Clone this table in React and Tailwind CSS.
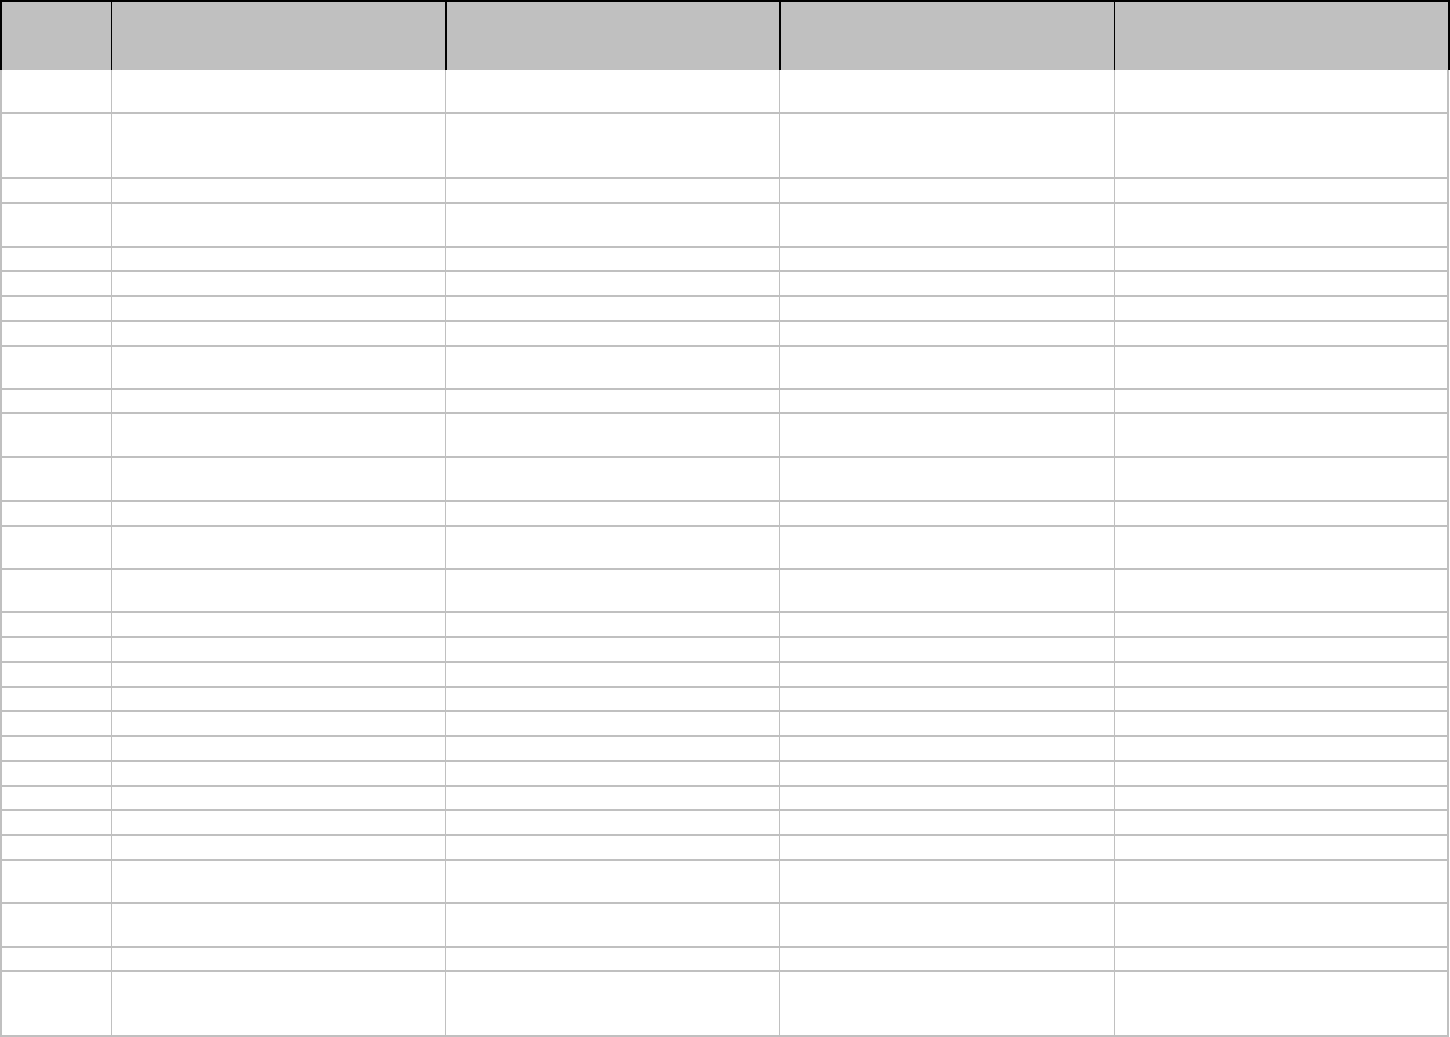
const rows = [
  "h-[44px]",
  "h-[65px]",
  "h-[25px]",
  "h-[44px]",
  "h-[24px]",
  "h-[25px]",
  "h-[25px]",
  "h-[25px]",
  "h-[43px]",
  "h-[24px]",
  "h-[44px]",
  "h-[44px]",
  "h-[25px]",
  "h-[43px]",
  "h-[43px]",
  "h-[25px]",
  "h-[25px]",
  "h-[25px]",
  "h-[24px]",
  "h-[25px]",
  "h-[25px]",
  "h-[25px]",
  "h-[24px]",
  "h-[25px]",
  "h-[25px]",
  "h-[43px]",
  "h-[44px]",
  "h-[24px]",
  "h-[65px]",
];

function HeaderRow() {
  return (
    <div className="flex h-[70px] w-[1450px] border-t-2 border-l-2 border-r-2 border-black bg-[#c0c0c0]">
      <div className="w-[109px]" />
      <div className="w-[334px] border-l border-black" />
      <div className="w-[334px] border-l-2 border-black" />
      <div className="w-[335px] border-l-2 border-black" />
      <div className="flex-1 border-l border-black" />
    </div>
  );
}

function BodyRow({ h }) {
  return (
    <div
      className={`flex w-[1449px] border-b-2 border-l-2 border-r-2 border-[#c0c0c0] bg-white ${h}`}
    >
      <div className="w-[109px]" />
      <div className="w-[334px] border-l border-[#c0c0c0]" />
      <div className="w-[334px] border-l border-[#c0c0c0]" />
      <div className="w-[335px] border-l border-[#c0c0c0]" />
      <div className="flex-1 border-l border-[#c0c0c0]" />
    </div>
  );
}

export default function App() {
  return (
    <div className="w-[1450px] h-[1037px] overflow-hidden bg-white font-['Liberation_Sans',sans-serif]">
      <HeaderRow />
      {rows.map((h, i) => (
        <BodyRow key={i} h={h} />
      ))}
    </div>
  );
}
